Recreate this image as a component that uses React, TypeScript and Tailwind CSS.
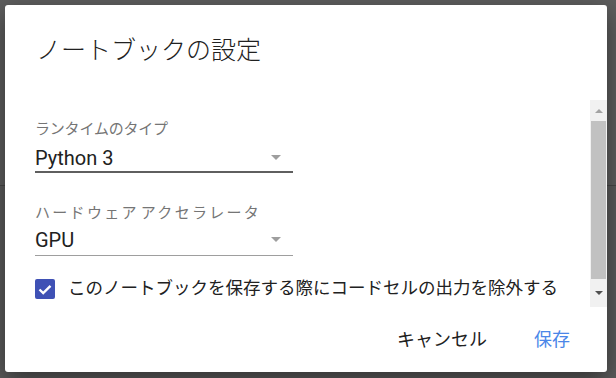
import React from 'react';

const font = { fontFamily: 'Roboto, "Noto Sans CJK JP", sans-serif' };

function Arrow() {
  return (
    <svg width="10" height="5" viewBox="0 0 10 5" className="mr-[12px] mb-[2px]">
      <path d="M0 0 L10 0 L5 5 Z" fill="#9e9e9e" />
    </svg>
  );
}

function SelectField({ label, value, labelGap, line, pb, tracking }: { label: string; value: string; labelGap: string; line: string; pb: string; tracking: string }) {
  return (
    <div className="w-[258px]">
      <div className={`text-[15px] leading-[20px] text-[#757575] ${tracking}`}>{label}</div>
      <div className={`flex items-center justify-between ${labelGap} ${pb} ${line}`}>
        <span className="text-[20px] leading-[24px] text-[#212121]">{value}</span>
        <Arrow />
      </div>
    </div>
  );
}

export default function App() {
  return (
    <div className="relative w-[616px] h-[378px] overflow-hidden bg-[#5b5b5b]" style={font}>
      <div className="h-[186px] border-b border-[#474747] bg-[#5e5e5e]" />

      <div className="absolute left-[5px] top-[5px] w-[602px] h-[367px] bg-white rounded-[3px] shadow-[0_8px_24px_rgba(0,0,0,0.45)] flex flex-col">
        <div className="h-[95px] pl-[31px] pt-[30px]">
          <h1 className="text-[25px] leading-[32px] font-light text-[#212121]">ノートブックの設定</h1>
        </div>

        <div className="h-[207px] flex">
          <div className="flex-1 pl-[30px] pt-[19px]">
            <SelectField
              label="ランタイムのタイプ"
              value="Python 3"
              labelGap="mt-[7px]"
              pb="pb-[1px]"
              line="border-b-2 border-[#5f5f5f]"
              tracking="tracking-[-0.2px]"
            />
            <div className="mt-[30px]">
              <SelectField
                label="ハードウェア アクセラレータ"
                value="GPU"
                labelGap="mt-[5px]"
                pb="pb-[3px]"
                line="border-b border-[#9e9e9e]"
                tracking="tracking-[2.3px] [word-spacing:-4px]"
              />
            </div>
            <label className="mt-[22px] flex items-center gap-[13px]">
              <span className="w-[20px] h-[20px] rounded-[2px] bg-[#3f51b5] flex items-center justify-center">
                <svg width="14" height="11" viewBox="0 0 14 11">
                  <path d="M1.5 5.5 L5.2 9 L12.5 1.8" fill="none" stroke="#fff" strokeWidth="2.4" />
                </svg>
              </span>
              <span className="text-[17.5px] leading-[24px] text-[#212121] -mt-[2px]">
                このノートブックを保存する際にコードセルの出力を除外する
              </span>
            </label>
          </div>

          <div className="w-[17px] bg-[#f1f1f1] flex flex-col">
            <div className="h-[21px] flex items-center justify-center">
              <svg width="8" height="4" viewBox="0 0 8 4">
                <path d="M0 4 L8 4 L4 0 Z" fill="#a3a3a3" />
              </svg>
            </div>
            <div className="h-[158px] mx-[1px] bg-[#c1c1c1]" />
            <div className="flex-1 flex items-center justify-center">
              <svg width="8" height="4" viewBox="0 0 8 4">
                <path d="M0 0 L8 0 L4 4 Z" fill="#505050" />
              </svg>
            </div>
          </div>
        </div>

        <div className="flex-1 flex items-center justify-end gap-[47px] pr-[37px]">
          <button className="text-[18px] leading-[24px] text-[#212121]">キャンセル</button>
          <button className="text-[18px] leading-[24px] text-[#4a86e8]">保存</button>
        </div>
      </div>
    </div>
  );
}
